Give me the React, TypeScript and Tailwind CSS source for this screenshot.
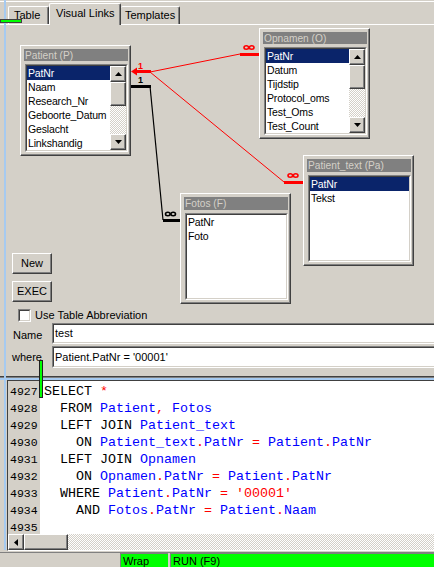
import React from "react";

type Tok = [string, string];

const codeLines: Tok[][] = [
  [["k", "SELECT "], ["p", "*"]],
  [["k", "  FROM "], ["i", "Patient"], ["p", ","], ["k", " "], ["i", "Fotos"]],
  [["k", "  LEFT JOIN "], ["i", "Patient_text"]],
  [["k", "    ON "], ["i", "Patient_text"], ["p", "."], ["i", "PatNr"], ["k", " "], ["p", "="], ["k", " "], ["i", "Patient"], ["p", "."], ["i", "PatNr"]],
  [["k", "  LEFT JOIN "], ["i", "Opnamen"]],
  [["k", "    ON "], ["i", "Opnamen"], ["p", "."], ["i", "PatNr"], ["k", " "], ["p", "="], ["k", " "], ["i", "Patient"], ["p", "."], ["i", "PatNr"]],
  [["k", "  WHERE "], ["i", "Patient"], ["p", "."], ["i", "PatNr"], ["k", " "], ["p", "="], ["k", " "], ["s", "'00001'"]],
  [["k", "    AND "], ["i", "Fotos"], ["p", "."], ["i", "PatNr"], ["k", " "], ["p", "="], ["k", " "], ["i", "Patient"], ["p", "."], ["i", "Naam"]],
  [],
];

const tokColor: Record<string, string> = {
  k: "text-black",
  i: "text-[#0000ff]",
  p: "text-[#ff0000]",
  s: "text-[#ff0000]",
};

function ScrollBtn({ dir }: { dir: "up" | "down" | "left" }) {
  return (
    <div className="w-[16px] h-[16px] shrink-0 bg-[#d4d0c8] border border-t-white border-l-white border-r-[#404040] border-b-[#404040] shadow-[inset_-1px_-1px_#808080] flex items-center justify-center">
      {dir === "up" && (
        <svg width="7" height="4" viewBox="0 0 7 4">
          <polygon points="3.5,0 7,4 0,4" fill="#000" />
        </svg>
      )}
      {dir === "down" && (
        <svg width="7" height="4" viewBox="0 0 7 4">
          <polygon points="0,0 7,0 3.5,4" fill="#000" />
        </svg>
      )}
      {dir === "left" && (
        <svg width="4" height="7" viewBox="0 0 4 7">
          <polygon points="0,3.5 4,0 4,7" fill="#000" />
        </svg>
      )}
    </div>
  );
}

function VScroll() {
  return (
    <div className="w-[16px] h-full flex flex-col shrink-0">
      <ScrollBtn dir="up" />
      <div className="h-[24px] w-[16px] bg-[#d4d0c8] border border-t-white border-l-white border-r-[#404040] border-b-[#404040] shadow-[inset_-1px_-1px_#808080]" />
      <div className="flex-1 bg-[repeating-conic-gradient(#d4d0c8_0%_25%,#ffffff_0%_50%)] bg-[length:2px_2px]" />
      <ScrollBtn dir="down" />
    </div>
  );
}

function TableBox({
  pos,
  title,
  items,
  selected,
  scroll,
}: {
  pos: string;
  title: string;
  items: string[];
  selected: number;
  scroll: boolean;
}) {
  return (
    <div
      className={`absolute ${pos} w-[111px] h-[111px] bg-[#d4d0c8] border border-t-white border-l-white border-r-[#404040] border-b-[#404040] shadow-[inset_-1px_-1px_#808080] pt-[3px] pl-[3px] pb-[3px] pr-[2px] flex flex-col`}
    >
      <div className="h-[13px] bg-[#808080] text-[#d4d0c8] text-[10.2px] leading-[13px] pl-[1px] whitespace-nowrap overflow-hidden">
        {title}
      </div>
      <div className="mt-[3px] ml-[1px] flex-1 border border-t-[#808080] border-l-[#808080] border-r-white border-b-white">
        <div className="h-full border border-t-[#404040] border-l-[#404040] border-r-[#d4d0c8] border-b-[#d4d0c8] bg-white flex overflow-hidden">
          <div className="flex-1 min-w-0 overflow-hidden">
            {items.map((it, i) => (
              <div
                key={it}
                className={`h-[14px] leading-[14px] text-[10.5px] tracking-[-0.15px] pl-[1px] whitespace-nowrap overflow-hidden ${
                  i === selected ? "bg-[#0a246a] text-white" : "text-black"
                }`}
              >
                {it}
              </div>
            ))}
          </div>
          {scroll && <VScroll />}
        </div>
      </div>
    </div>
  );
}

function Infinity8({ cx, cy, color }: { cx: number; cy: number; color: string }) {
  return (
    <g stroke={color} strokeWidth="1.6" fill="none">
      <ellipse cx={cx - 2.7} cy={cy} rx="2.3" ry="1.7" />
      <ellipse cx={cx + 2.7} cy={cy} rx="2.3" ry="1.7" />
    </g>
  );
}

export default function App() {
  return (
    <div className="relative w-[434px] h-[567px] overflow-hidden bg-[#d4d0c8] font-['Liberation_Sans',Arial,sans-serif] text-black">
      {/* Tab header */}
      <div className="h-[23px] flex items-end pl-[8px] border-t border-t-white mt-[1px] box-border">
        <div className="w-[41px] h-[18px] border border-b-0 border-t-white border-l-white border-r-[#404040] shadow-[inset_-1px_0_#808080] rounded-t-[2px] text-[11px] leading-[17px] pl-[5px]">
          Table
        </div>
        <div className="relative z-10 -mb-[1px] w-[72px] h-[22px] bg-[#d4d0c8] border border-b-0 border-t-white border-l-white border-r-[#404040] shadow-[inset_-1px_0_#808080] rounded-t-[2px] text-[11px] leading-[18px] pl-[6px] whitespace-nowrap">
          Visual Links
        </div>
        <div className="w-[59px] h-[18px] border border-b-0 border-l-0 border-t-white border-r-[#404040] shadow-[inset_-1px_0_#808080] rounded-t-[2px] text-[11px] leading-[17px] pl-[4px]">
          Templates
        </div>
      </div>

      {/* Tab panel */}
      <div className="relative h-[352px] border-t border-t-white pt-[228px]">
        <TableBox
          pos="left-[20px] top-[20px]"
          title="Patient (P)"
          items={["PatNr", "Naam", "Research_Nr", "Geboorte_Datum", "Geslacht", "Linkshandig"]}
          selected={0}
          scroll
        />
        <TableBox
          pos="left-[259px] top-[3px]"
          title="Opnamen (O)"
          items={["PatNr", "Datum", "Tijdstip", "Protocol_oms", "Test_Oms", "Test_Count"]}
          selected={0}
          scroll
        />
        <TableBox
          pos="left-[303px] top-[130px]"
          title="Patient_text (Pa)"
          items={["PatNr", "Tekst"]}
          selected={0}
          scroll={false}
        />
        <TableBox
          pos="left-[180px] top-[168px]"
          title="Fotos (F)"
          items={["PatNr", "Foto"]}
          selected={-1}
          scroll={false}
        />

        <div className="relative flex flex-col items-start pl-[12px] gap-[7px]">
          <button className="w-[40px] h-[21px] bg-[#d4d0c8] border border-t-white border-l-white border-r-[#404040] border-b-[#404040] shadow-[inset_-1px_-1px_#808080] text-[11px] leading-[19px] text-center">
            New
          </button>
          <button className="w-[40px] h-[21px] bg-[#d4d0c8] border border-t-white border-l-white border-r-[#404040] border-b-[#404040] shadow-[inset_-1px_-1px_#808080] text-[11px] leading-[19px] text-center">
            EXEC
          </button>
        </div>
        <div className="flex items-center mt-[7px] pl-[18px] h-[13px]">
          <div className="w-[13px] h-[13px] border border-t-[#808080] border-l-[#808080] border-r-white border-b-white">
            <div className="w-full h-full bg-white border border-t-[#404040] border-l-[#404040] border-r-[#d4d0c8] border-b-[#d4d0c8]" />
          </div>
          <span className="ml-[4px] text-[11px] leading-[13px]">Use Table Abbreviation</span>
        </div>
        <div className="flex items-center mt-[1px] h-[21px]">
          <span className="w-[52px] pl-[13px] text-[11px] pt-[4px]">Name</span>
          <div className="flex-1 h-[21px] border border-t-[#808080] border-l-[#808080] border-r-0 border-b-white">
            <div className="h-full bg-white border border-t-[#404040] border-l-[#404040] border-r-0 border-b-[#d4d0c8] text-[11px] leading-[17px] pl-[1px]">
              test
            </div>
          </div>
        </div>
        <div className="flex items-center mt-[2px] h-[22px]">
          <span className="w-[52px] pl-[12px] text-[11px]">where</span>
          <div className="flex-1 h-[22px] border border-t-[#808080] border-l-[#808080] border-r-0 border-b-white">
            <div className="h-full bg-white border border-t-[#404040] border-l-[#404040] border-r-0 border-b-[#d4d0c8] text-[11px] leading-[18px] pl-[1px]">
              Patient.PatNr = '00001'
            </div>
          </div>
        </div>
      </div>

      {/* Splitter */}
      <div className="h-[1px] bg-[#404040]" />
      <div className="h-[1px] bg-[#808080]" />
      <div className="h-[2px] bg-[#a6caf0]" />

      {/* Editor */}
      <div className="ml-[7px] h-[171px] flex flex-col border border-t-[#404040] border-l-[#404040] border-r-0 border-b-white">
        <div className="flex-1 flex overflow-hidden font-['Liberation_Mono','Courier_New',monospace]">
          <div className="w-[32px] bg-[#d4d0c8] pt-[2px] shrink-0">
            {codeLines.map((_, i) => (
              <div key={i} className="h-[17px] leading-[17px] text-[11.5px] pl-[2px] text-black">
                {4927 + i}
              </div>
            ))}
          </div>
          <div className="flex-1 bg-white pt-[2px] pl-[4px] overflow-hidden">
            {codeLines.map((ln, i) => (
              <div key={i} className="h-[17px] leading-[17px] text-[13.33px] whitespace-pre">
                {ln.map((t, j) => (
                  <span key={j} className={tokColor[t[0]]}>
                    {t[1]}
                  </span>
                ))}
              </div>
            ))}
          </div>
        </div>
        <div className="h-[16px] flex">
          <ScrollBtn dir="left" />
          <div className="w-[44px] h-[16px] bg-[#d4d0c8] border border-t-white border-l-white border-r-[#404040] border-b-[#404040] shadow-[inset_-1px_-1px_#808080]" />
          <div className="flex-1 bg-[repeating-conic-gradient(#d4d0c8_0%_25%,#ffffff_0%_50%)] bg-[length:2px_2px]" />
        </div>
      </div>

      {/* Status bar */}
      <div className="mt-[1px] h-[15px] flex gap-[2px] border-t border-t-[#808080] text-[11px] leading-[14px]">
        <div className="w-[118px] bg-[#d4d0c8]" />
        <div className="w-[48px] bg-[#00ff00] border-l border-t border-l-[#808080] border-t-[#808080] pl-[2px]">Wrap</div>
        <div className="flex-1 bg-[#00ff00] border-l border-t border-l-[#808080] border-t-[#808080] pl-[2px]">RUN (F9)</div>
      </div>

      {/* Overlays: left focus strip, markers and link lines */}
      <div className="absolute left-[4px] top-0 w-[2px] h-[550px] bg-[#a6caf0]" />
      <div className="absolute left-0 top-[19px] w-[22px] h-[4px] bg-[#00ff00] border border-[#404040]" />
      <div className="absolute left-[39px] top-[360px] w-[4px] h-[38px] bg-[#00ff00] border border-[#202020]" />

      <svg className="absolute left-0 top-0 pointer-events-none" width="434" height="567" viewBox="0 0 434 567">
        <line x1="150" y1="72" x2="240" y2="54" stroke="#ff0000" strokeWidth="1" />
        <line x1="150" y1="72" x2="284" y2="182" stroke="#ff0000" strokeWidth="1" />
        <rect x="136" y="70" width="15" height="3" fill="#ff0000" />
        <polygon points="131,71.5 137,67.5 137,75.5" fill="#ff0000" />
        <rect x="240" y="53" width="19" height="3" fill="#ff0000" />
        <rect x="284" y="181" width="19" height="3" fill="#ff0000" />
        <rect x="131" y="85" width="20" height="3" fill="#000" />
        <line x1="150" y1="86" x2="163" y2="220" stroke="#000" strokeWidth="1.2" />
        <rect x="163" y="219" width="17" height="3" fill="#000" />
        <text x="138" y="69" fontSize="9" fontWeight="bold" fill="#ff0000" fontFamily="Liberation Sans, Arial, sans-serif">1</text>
        <text x="138" y="83" fontSize="9" fontWeight="bold" fill="#000" fontFamily="Liberation Sans, Arial, sans-serif">1</text>
        <Infinity8 cx={249} cy={47.5} color="#ff0000" />
        <Infinity8 cx={293} cy={175.5} color="#ff0000" />
        <Infinity8 cx={170.5} cy={214} color="#000" />
      </svg>
    </div>
  );
}
